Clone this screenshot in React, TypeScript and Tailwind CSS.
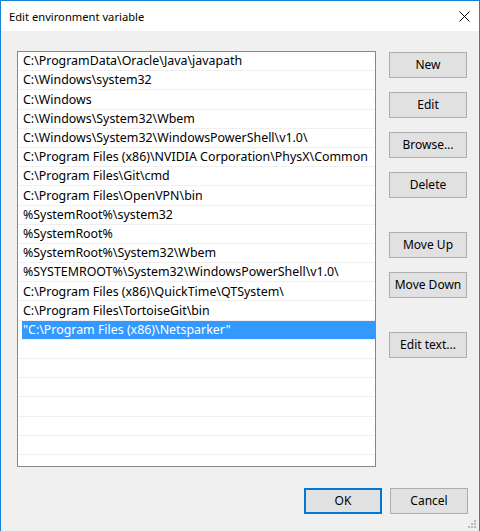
const paths = [
  'C:\\ProgramData\\Oracle\\Java\\javapath',
  'C:\\Windows\\system32',
  'C:\\Windows',
  'C:\\Windows\\System32\\Wbem',
  'C:\\Windows\\System32\\WindowsPowerShell\\v1.0\\',
  'C:\\Program Files (x86)\\NVIDIA Corporation\\PhysX\\Common',
  'C:\\Program Files\\Git\\cmd',
  'C:\\Program Files\\OpenVPN\\bin',
  '%SystemRoot%\\system32',
  '%SystemRoot%',
  '%SystemRoot%\\System32\\Wbem',
  '%SYSTEMROOT%\\System32\\WindowsPowerShell\\v1.0\\',
  'C:\\Program Files (x86)\\QuickTime\\QTSystem\\',
  'C:\\Program Files\\TortoiseGit\\bin',
  '"C:\\Program Files (x86)\\Netsparker"',
]

const SELECTED = 14
const EMPTY_ROWS = 6

function Btn({ label, primary = false }: { label: string; primary?: boolean }) {
  return (
    <button
      className={`w-[78px] h-[26px] flex items-center justify-center bg-[#e1e1e1] text-[12px] text-black ${
        primary ? 'border-2 border-[#0078d7]' : 'border border-[#adadad]'
      }`}
    >
      {label}
    </button>
  )
}

function CloseIcon() {
  return (
    <svg width="11" height="11" viewBox="0 0 11 11" fill="none" stroke="#000" strokeWidth="1">
      <path d="M0.5 0.5 L10.5 10.5 M10.5 0.5 L0.5 10.5" />
    </svg>
  )
}

function Grip() {
  const dots = [
    [6, 0],
    [6, 3], [3, 3],
    [6, 6], [3, 6], [0, 6],
  ]
  return (
    <svg width="8" height="8" viewBox="0 0 8 8" className="absolute right-[3px] bottom-[3px]">
      {dots.map(([x, y], i) => (
        <rect key={i} x={x} y={y} width="2" height="2" fill="#b8b8b8" />
      ))}
    </svg>
  )
}

export default function App() {
  return (
    <div
      className="relative w-[480px] h-[531px] flex flex-col bg-[#f0f0f0] border-l border-t border-r border-[#1883d7] text-black overflow-hidden"
      style={{ fontFamily: '"Noto Sans", "Open Sans", sans-serif' }}
    >
      {/* title bar */}
      <div className="h-[30px] shrink-0 bg-white flex items-center justify-between pl-[8px] pr-[9px]">
        <span className="text-[11.2px] leading-none pt-[1px]">Edit environment variable</span>
        <CloseIcon />
      </div>

      <div className="flex flex-col pl-[16px] pr-[11px] pt-[20px]">
        <div className="flex gap-[13px]">
          {/* list */}
          <div className="w-[359px] h-[416px] bg-white border border-[#828790] overflow-hidden">
            {paths.map((p, i) => (
              <div key={p} className="h-[19.2px] border-b border-[#f0f0f0] pl-[4px]">
                <div
                  className={`h-full flex items-center pl-[1px] pt-[1px] text-[12.4px] whitespace-nowrap ${
                    i === SELECTED ? 'bg-[#3399ff] text-white' : ''
                  }`}
                >
                  {p}
                </div>
              </div>
            ))}
            {Array.from({ length: EMPTY_ROWS }).map((_, i) => (
              <div key={i} className="h-[19.2px] border-b border-[#f0f0f0]" />
            ))}
          </div>

          {/* side buttons */}
          <div className="flex flex-col pt-[1px]">
            <div className="flex flex-col gap-[14px]">
              <Btn label="New" />
              <Btn label="Edit" />
              <Btn label="Browse..." />
              <Btn label="Delete" />
            </div>
            <div className="flex flex-col gap-[14px] mt-[34px]">
              <Btn label="Move Up" />
              <Btn label="Move Down" />
            </div>
            <div className="mt-[34px]">
              <Btn label="Edit text..." />
            </div>
          </div>
        </div>

        <div className="flex justify-end gap-[8px] mt-[21px]">
          <Btn label="OK" primary />
          <Btn label="Cancel" />
        </div>
      </div>

      <Grip />
    </div>
  )
}
